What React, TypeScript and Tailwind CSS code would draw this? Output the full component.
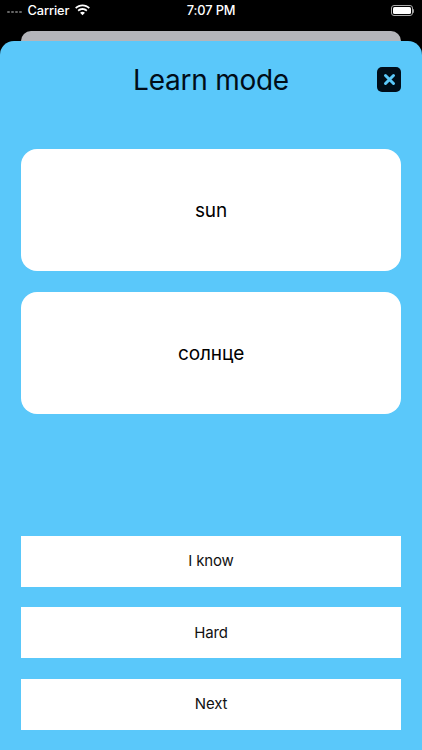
const ANSWERS = ['I know', 'Hard', 'Next'];
const WORDS = ['sun', 'солнце'];

function StatusBar() {
  return (
    <div className="relative flex h-[31px] items-center justify-between pl-[7px] pr-[8px] pb-[10px] text-[12.8px] font-medium tracking-[-0.1px] text-white">
      <div className="flex items-center">
        <div className="mt-[3px] flex items-center gap-[1.5px]">
          {[0, 1, 2, 3].map((i) => (
            <span key={i} className="h-[2.500px] w-[2.500px] rounded-full bg-[#666]" />
          ))}
        </div>
        <span className="ml-[6px]">Carrier</span>
        <svg className="mb-[2px] ml-[5px]" width="17" height="12" viewBox="0 0 17 12" fill="white">
          <path d="M8.500 2.300c2.400 0 4.600.9 6.200 2.500l1.200-1.300C13.900 1.500 11.300.4 8.500.4S3.100 1.500 1.100 3.500l1.200 1.300C3.900 3.200 6.100 2.300 8.500 2.300z" />
          <path d="M8.500 5.900c1.400 0 2.700.5 3.700 1.500l1.200-1.300C12.100 4.800 10.400 4.100 8.500 4.100s-3.600.7-4.900 2l1.200 1.300c1-1 2.300-1.500 3.700-1.500z" />
          <path d="M8.500 11.300l2.400-2.500c-.6-.6-1.500-1-2.400-1s-1.800.4-2.400 1l2.400 2.500z" />
        </svg>
      </div>
      <span className="absolute left-0 right-0 text-center">7:07 PM</span>
      <div className="flex items-center">
        <div className="h-[11px] w-[22px] rounded-[3px] border border-[#aaa] p-[1px]">
          <div className="h-full w-full rounded-[1.500px] bg-white" />
        </div>
        <div className="h-[4px] w-[1px] rounded-r-sm bg-[#999]" />
      </div>
    </div>
  );
}

export default function App() {
  return (
    <div className="flex h-[750px] w-[422px] flex-col overflow-hidden bg-black font-['Inter',sans-serif] text-black">
      <StatusBar />
      <div className="mx-[21px] h-[10px] shrink-0 rounded-t-[10px] bg-[#b4b5ba]" />
      <div className="flex flex-1 flex-col rounded-t-[14px] bg-[#5ac8fa] px-[21px]">
        <div className="relative mt-[20px] flex h-[40px] items-center justify-center">
          <h1 className="mb-[3px] text-[28px] leading-none font-normal tracking-[-0.25px] text-[#000d18]">Learn mode</h1>
          <button className="absolute right-0 top-[6px] flex h-[25px] w-[24px] items-center justify-center rounded-[5px] bg-[#000d18]">
            <svg width="13" height="13" viewBox="0 0 13 13" stroke="#5ac8fa" strokeWidth="3" strokeLinecap="round">
              <path d="M2.500 2.500l8 8M10.500 2.500l-8 8" />
            </svg>
          </button>
        </div>
        <div className="mt-[48px] flex flex-col gap-[21px]">
          {WORDS.map((w) => (
            <div key={w} className="flex h-[122px] items-center justify-center rounded-[16px] bg-white pt-[3px] text-[19px] tracking-[-0.1px]">
              {w}
            </div>
          ))}
        </div>
        <div className="mt-[122px] flex flex-col gap-[20.400px]">
          {ANSWERS.map((a) => (
            <button key={a} className="flex h-[51px] items-center justify-center bg-white text-[15px] tracking-[-0.15px] text-[#111]">
              {a}
            </button>
          ))}
        </div>
      </div>
    </div>
  );
}
